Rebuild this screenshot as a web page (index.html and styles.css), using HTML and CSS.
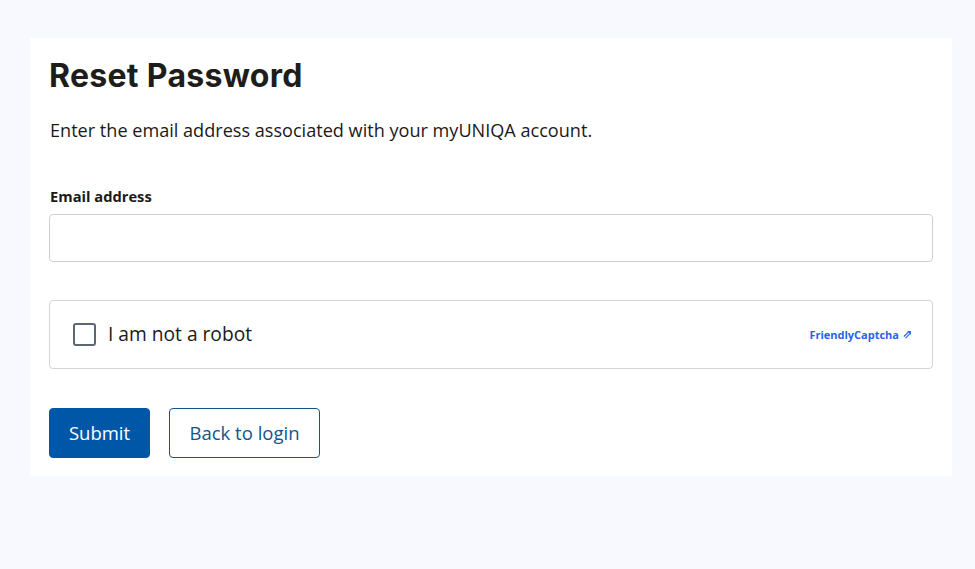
FILE: index.html
```html
<!DOCTYPE html>
<html lang="en">
<head>
<meta charset="utf-8">
<title>Reset Password</title>
<link rel="stylesheet" href="styles.css">
</head>
<body>
<main class="page">
  <section class="card">
    <h1 class="title">Reset Password</h1>
    <p class="intro">Enter the email address associated with your myUNIQA account.</p>
    <label class="label" for="email">Email address</label>
    <input class="input" id="email" type="email">
    <div class="captcha">
      <div class="captcha-left">
        <span class="checkbox"></span>
        <span class="captcha-text">I am not a robot</span>
      </div>
      <span class="brand">FriendlyCaptcha <svg class="brand-icon" viewBox="0 0 10 10" width="9" height="9"><path d="M1 7.2 L6.2 2 M2.8 9 L8 3.8" fill="none" stroke="#2563eb" stroke-width="1.3"/><path d="M4.6 1.2 H8.8 V5.4 Z" fill="#2563eb"/></svg></span>
    </div>
    <div class="actions">
      <button class="btn btn-primary" type="button">Submit</button>
      <button class="btn btn-outline" type="button">Back to login</button>
    </div>
  </section>
</main>
</body>
</html>
```
FILE: styles.css
```css
html, body {
  margin: 0;
  padding: 0;
  background: #f8f9fe;
}
body {
  font-family: "Open Sans", "Noto Sans", sans-serif;
  color: #1a1a1a;
}
.page {
  padding: 38px 23px 0 30px;
}
.card {
  background: #ffffff;
  padding: 16px 19px 18px 19px;
  display: flex;
  flex-direction: column;
}
.title {
  margin: 0;
  font-family: "Inter", sans-serif;
  font-weight: 700;
  font-size: 32px;
  line-height: 44px;
  letter-spacing: 0.3px;
  color: #1d1d1b;
}
.intro {
  margin: 20px 0 0 1px;
  font-size: 18.1px;
  line-height: 24px;
  color: #1a1a1a;
}
.label {
  margin: 44px 0 0 1px;
  font-size: 14.7px;
  font-weight: 700;
  line-height: 20px;
  color: #1a1a1a;
}
.input {
  margin-top: 8px;
  height: 48px;
  box-sizing: border-box;
  border: 1px solid #cfcfcf;
  border-radius: 4px;
  background: #fff;
  font: inherit;
}
.captcha {
  margin-top: 38px;
  height: 69px;
  box-sizing: border-box;
  border: 1px solid #d4d4d4;
  border-radius: 4px;
  display: flex;
  align-items: center;
  justify-content: space-between;
  padding: 0 20px 0 23px;
}
.captcha-left {
  display: flex;
  align-items: center;
  gap: 12px;
}
.checkbox {
  width: 19px;
  height: 19px;
  border: 2px solid #5d6673;
  border-radius: 3px;
  box-sizing: content-box;
}
.captcha-text {
  font-size: 19.2px;
  color: #1a1a1a;
  line-height: 24px;
  padding-bottom: 1px;
}
.brand {
  font-family: "Open Sans", sans-serif;
  font-weight: 700;
  font-size: 11px;
  color: #2563eb;
  display: flex;
  align-items: center;
  gap: 4px;
}
.brand-icon {
  display: block;
}
.actions {
  margin-top: 39px;
  display: flex;
  gap: 19px;
}
.btn {
  height: 50px;
  border-radius: 4px;
  font-family: "Open Sans", sans-serif;
  font-size: 18.5px;
  padding: 0 0 1px 0;
  cursor: pointer;
}
.btn-primary {
  background: #0057a8;
  color: #fff;
  border: 1px solid #0057a8;
  width: 101px;
}
.btn-outline {
  background: #fff;
  color: #11548f;
  border: 1px solid #11548f;
  width: 151px;
}
```
